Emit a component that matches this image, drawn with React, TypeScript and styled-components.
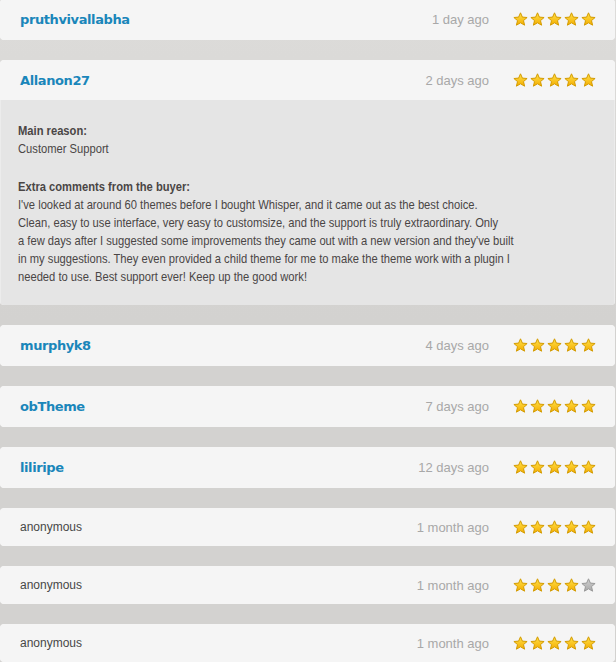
import React from "react";
import styled, { createGlobalStyle } from "styled-components";

const Global = createGlobalStyle`
  html, body { margin: 0; padding: 0; }
  body {
    background: linear-gradient(#dddcda 0px, #d6d5d3 200px, #d3d2d0 320px);
    min-height: 662px;
    font-family: "Liberation Sans", Arial, sans-serif;
  }
`;

const List = styled.div`
  display: flex;
  flex-direction: column;
  gap: 20px;
  margin-top: -1px;
  width: 615px;
`;

const Card = styled.div`
  background: #f5f5f5;
  border-radius: 4px;
  overflow: hidden;
`;

const Header = styled.div<{ $compact?: boolean; $open?: boolean }>`
  display: flex;
  align-items: center;
  height: ${(p) => (p.$compact ? 38 : p.$open ? 40 : 41)}px;
  padding: 0 19px 0 20px;
  border-radius: 4px;
  background: #f5f5f5;
`;

const Name = styled.span<{ $anon?: boolean }>`
  flex: 1;
  color: ${(p) => (p.$anon ? "#474747" : "#1a86ba")};
  font-family: ${(p) =>
    p.$anon ? '"Liberation Sans", Arial, sans-serif' : '"DejaVu Sans", Verdana, sans-serif'};
  font-weight: ${(p) => (p.$anon ? 400 : 700)};
  font-size: ${(p) => (p.$anon ? 12 : 13)}px;
  letter-spacing: ${(p) => (p.$anon ? 0 : -0.4)}px;
`;

const When = styled.span`
  color: #a8a8a8;
  font-size: 13px;
  margin-right: 24px;
`;

const Stars = styled.div`
  display: flex;
  gap: 2px;
`;

const Details = styled.div`
  background: #e5e5e5;
  border-left: 1px solid #ececec;
  border-right: 1px solid #ececec;
  padding: 22px 17px 19px 17px;
  color: #4a4645;
  overflow: hidden;
`;

/* Arial-Narrow look: Liberation Sans condensed horizontally */
const Narrow = styled.div`
  width: 640px;
  transform: scaleX(0.86);
  transform-origin: left top;
  font-family: "Liberation Sans", Arial, sans-serif;
  font-size: 13px;
  line-height: 18px;
`;

const Section = styled.div`
  & + & { margin-top: 20px; }
`;

const Label = styled.div`
  font-weight: 700;
`;

const Star: React.FC<{ on: boolean; id: string }> = ({ on, id }) => (
  <svg width="15" height="15" viewBox="0 0 15 15">
    <defs>
      <linearGradient id={id} x1="0" y1="0" x2="0" y2="1">
        <stop offset="0" stopColor={on ? "#ffe14a" : "#d0d0d0"} />
        <stop offset="1" stopColor={on ? "#f4ad00" : "#a9a9a9"} />
      </linearGradient>
    </defs>
    <path
      d="M7.5 0.8 L9.4 5.1 L14.1 5.5 L10.5 8.6 L11.6 13.2 L7.5 10.8 L3.4 13.2 L4.5 8.6 L0.9 5.5 L5.6 5.1 Z"
      fill={`url(#${id})`}
      stroke={on ? "#d39b00" : "#999999"}
      strokeWidth="1"
      strokeLinejoin="round"
    />
  </svg>
);

type Review = { name: string; when: string; stars: number; anon?: boolean; open?: boolean };

const reviews: Review[] = [
  { name: "pruthvivallabha", when: "1 day ago", stars: 5 },
  { name: "Allanon27", when: "2 days ago", stars: 5, open: true },
  { name: "murphyk8", when: "4 days ago", stars: 5 },
  { name: "obTheme", when: "7 days ago", stars: 5 },
  { name: "liliripe", when: "12 days ago", stars: 5 },
  { name: "anonymous", when: "1 month ago", stars: 5, anon: true },
  { name: "anonymous", when: "1 month ago", stars: 4, anon: true },
  { name: "anonymous", when: "1 month ago", stars: 5, anon: true },
];

const commentLines = [
  "I've looked at around 60 themes before I bought Whisper, and it came out as the best choice.",
  "Clean, easy to use interface, very easy to customsize, and the support is truly extraordinary. Only",
  "a few days after I suggested some improvements they came out with a new version and they've built",
  "in my suggestions. They even provided a child theme for me to make the theme work with a plugin I",
  "needed to use. Best support ever! Keep up the good work!",
];

export default function App() {
  return (
    <>
      <Global />
      <List>
        {reviews.map((r, i) => (
          <Card key={i}>
            <Header $compact={r.anon} $open={r.open}>
              <Name $anon={r.anon}>{r.name}</Name>
              <When>{r.when}</When>
              <Stars>
                {[0, 1, 2, 3, 4].map((s) => (
                  <Star key={s} on={s < r.stars} id={`g${i}-${s}`} />
                ))}
              </Stars>
            </Header>
            {r.open && (
              <Details>
                <Narrow>
                  <Section>
                    <Label>Main reason:</Label>
                    <div>Customer Support</div>
                  </Section>
                  <Section>
                    <Label>Extra comments from the buyer:</Label>
                    <div>
                      {commentLines.map((l, k) => (
                        <React.Fragment key={k}>
                          {l}
                          {k < commentLines.length - 1 && <br />}
                        </React.Fragment>
                      ))}
                    </div>
                  </Section>
                </Narrow>
              </Details>
            )}
          </Card>
        ))}
      </List>
    </>
  );
}
